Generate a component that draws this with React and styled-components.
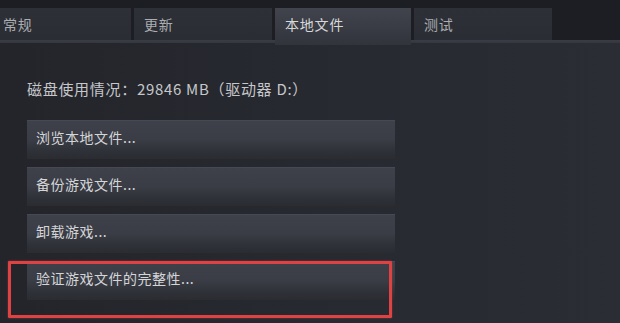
import React from "react";
import styled, { createGlobalStyle } from "styled-components";

const GlobalStyle = createGlobalStyle`
  html, body {
    margin: 0;
    padding: 0;
    background: #24262c;
  }
  * {
    box-sizing: border-box;
  }
`;

const Window = styled.div`
  width: 620px;
  height: 323px;
  overflow: hidden;
  background: linear-gradient(90deg, #23252b 0%, #272a30 60%, #2a2d34 100%);
  font-family: "Noto Sans CJK SC", "Noto Sans", sans-serif;
  color: #c9cacc;
  display: flex;
  flex-direction: column;
`;

const TopStrip = styled.div`
  height: 8px;
  background: #1d1e23;
`;

const TabRow = styled.div`
  display: flex;
  align-items: flex-start;
  gap: 3px;
  height: 35px;
  margin-left: -7px;
  background: linear-gradient(180deg, #1d1e23 0px, #1d1e23 32px, #3a3d45 32px, #34373e 35px);
`;

const Tab = styled.div`
  width: ${(p) => (p.$active ? 136 : 138)}px;
  height: ${(p) => (p.$active ? 37 : 32)}px;
  padding: 7px 10px 0;
  font-size: 14px;
  letter-spacing: 0.8px;
  line-height: 18px;
  color: ${(p) => (p.$active ? "#d6d7d9" : "#abadb1")};
  background: ${(p) =>
    p.$active
      ? "linear-gradient(180deg, #41444c 0%, #3a3d45 45%, #31343b 100%)"
      : "linear-gradient(180deg, #2d3037 0%, #2a2d33 100%)"};
  z-index: ${(p) => (p.$active ? 1 : 0)};
`;

const Content = styled.div`
  padding: 35px 0 0 27px;
  display: flex;
  flex-direction: column;
`;

const DiskLabel = styled.div`
  font-size: 15px;
  letter-spacing: 0.7px;
  line-height: 22px;
  color: #c6c7ca;
  margin-bottom: 20px;
`;

const ButtonList = styled.div`
  display: flex;
  flex-direction: column;
  gap: 8px;
  width: 368px;
`;

const ActionButton = styled.div`
  position: relative;
  height: 39px;
  padding: 8px 0 0 9px;
  font-size: 14px;
  letter-spacing: 0.5px;
  line-height: 19px;
  color: #d4d5d7;
  background: linear-gradient(180deg, #3e414a 0%, #3a3d45 50%, #2f3138 80%, #2a2c32 100%);
  box-shadow: inset 0 1px 0 #464953;
`;

const Highlight = styled.div`
  position: absolute;
  left: -19px;
  top: 0;
  width: 384px;
  height: 57px;
  border: 3px solid #de4242;
  border-radius: 1px;
  box-shadow: 0 0 2px rgba(222, 66, 66, 0.6);
  pointer-events: none;
`;

const tabs = [
  { label: "常规" },
  { label: "更新" },
  { label: "本地文件", active: true },
  { label: "测试" },
];

const actions = [
  "浏览本地文件...",
  "备份游戏文件...",
  "卸载游戏...",
  "验证游戏文件的完整性...",
];

export default function App() {
  return (
    <>
      <GlobalStyle />
      <Window>
        <TopStrip />
        <TabRow>
          {tabs.map((t) => (
            <Tab key={t.label} $active={t.active}>
              {t.label}
            </Tab>
          ))}
        </TabRow>
        <Content>
          <DiskLabel>磁盘使用情况：29846 MB（驱动器 D:）</DiskLabel>
          <ButtonList>
            {actions.map((a, i) => (
              <ActionButton key={a}>
                {a}
                {i === actions.length - 1 && <Highlight />}
              </ActionButton>
            ))}
          </ButtonList>
        </Content>
      </Window>
    </>
  );
}
